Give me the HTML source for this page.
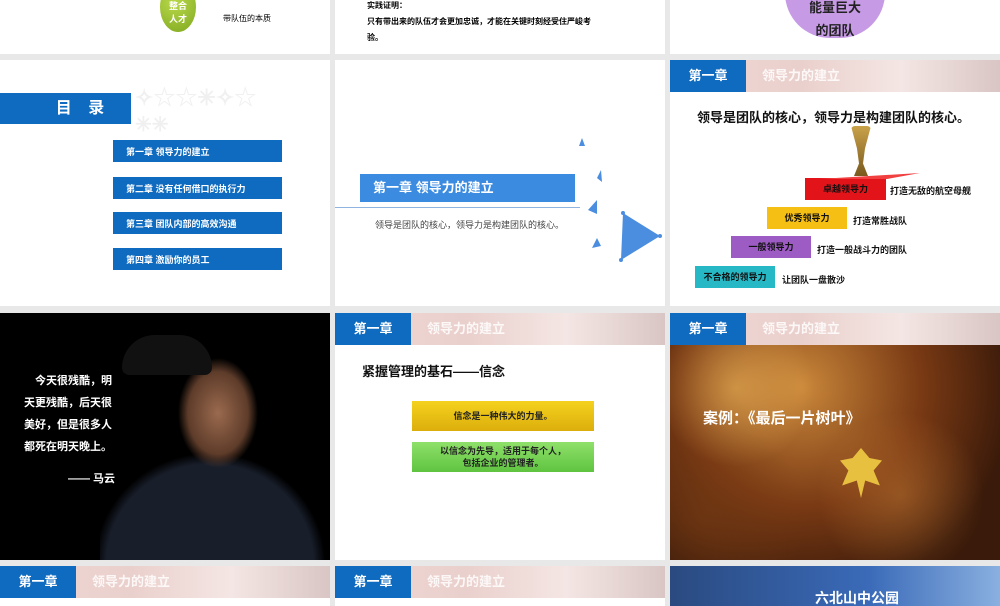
<!DOCTYPE html>
<html><head><meta charset="utf-8"><style>
*{margin:0;padding:0;box-sizing:border-box}
body{width:1000px;height:600px;background:#e8e8e8;position:relative;overflow:hidden;font-family:"Liberation Sans","Noto Sans CJK SC",sans-serif;font-weight:bold}
.s{position:absolute;background:#fff;overflow:hidden}
.a{position:absolute;white-space:nowrap}
.hdr{position:absolute;left:0;top:0;right:0;height:32px;background:linear-gradient(90deg,#f2d8d6,#ead0cc 40%,#f4e6e4 70%,#d9c6c4);}
.hdr .b{position:absolute;left:0;top:0;width:76px;height:32px;background:#0f6bbf;color:#fff;font-size:13px;line-height:32px;text-align:center}
.hdr .t{position:absolute;left:92px;top:0;line-height:32px;color:#fff;font-size:13px;opacity:.85}
.toc{position:absolute;left:113px;width:169px;height:22px;background:#0f6bbf;color:#fff;font-size:9px;line-height:24px;padding-left:13px}
.step{position:absolute;height:22px;font-size:9px;line-height:22px;text-align:center;color:#111}
.lab{position:absolute;font-size:9px;color:#111;white-space:nowrap}
</style></head><body>
<!-- row1 -->
<div class="s" style="left:0;top:0;width:330px;height:54px">
 <div class="a" style="left:160px;top:-18px;width:36px;height:50px;border-radius:50%;background:radial-gradient(circle at 40% 40%,#b9d84a,#7fa820)"></div>
 <div class="a" style="left:168px;top:0;color:#fff;font-size:9px;line-height:13px;text-align:center;width:20px;white-space:normal">整合<br>人才</div>
 <div class="a" style="left:223px;top:13px;font-size:8px;font-weight:normal">带队伍的本质</div>
</div>
<div class="s" style="left:335px;top:0;width:330px;height:54px">
 <div class="a" style="left:32px;top:0;font-size:8px">实践证明：</div>
 <div class="a" style="left:32px;top:16px;font-size:8px">只有带出来的队伍才会更加忠诚，才能在关键时刻经受住严峻考</div>
 <div class="a" style="left:32px;top:32px;font-size:8px">验。</div>
</div>
<div class="s" style="left:670px;top:0;width:330px;height:54px">
 <div class="a" style="left:115px;top:-20px;width:100px;height:58px;border-radius:0 0 45px 45px;background:#c79ae6"></div>
 <div class="a" style="left:115px;top:-4px;width:100px;text-align:center;font-size:13px;line-height:23px;color:#222;white-space:normal">能量巨大<br>的团队</div>
</div>
<!-- row2 -->
<div class="s" style="left:0;top:60px;width:330px;height:246px">
 <div class="a" style="left:0;top:33px;width:131px;height:31px;background:#0f6bbf;color:#fff;font-size:16px;line-height:31px;text-align:center;padding-left:35px;letter-spacing:6px">目 录</div>
 <div class="a" style="left:135px;top:20px;color:#f0f0f0;font-size:22px">✧☆☆✳✧☆</div>
 <div class="a" style="left:135px;top:52px;color:#f0f0f0;font-size:20px">✳✳</div>
 <div class="toc" style="top:80px">第一章 领导力的建立</div>
 <div class="toc" style="top:117px">第二章 没有任何借口的执行力</div>
 <div class="toc" style="top:152px">第三章 团队内部的高效沟通</div>
 <div class="toc" style="top:188px">第四章 激励你的员工</div>
</div>
<div class="s" style="left:335px;top:60px;width:330px;height:246px">
 <div class="a" style="left:25px;top:114px;width:215px;height:28px;background:#3b8be0;color:#fff;font-size:13px;line-height:28px;padding-left:13px">第一章 领导力的建立</div>
 <div class="a" style="left:0;top:147px;width:245px;height:1px;background:#8fb4e0"></div>
 <div class="a" style="left:40px;top:158px;font-size:9px;font-weight:normal;color:#444">领导是团队的核心，领导力是构建团队的核心。</div>
 <svg class="a" style="left:240px;top:50px" width="90" height="160"><g fill="#4b8ee0"><polygon points="7,28 4,36 10,36"/><polygon points="26,60 22,68 27,72"/><polygon points="22,90 13,100 22,104"/><polygon points="22,128 17,138 26,136"/><polygon points="48,103 46,150 85,126"/></g><circle cx="48" cy="103" r="2" fill="#4b8ee0"/><circle cx="85" cy="126" r="2" fill="#4b8ee0"/><circle cx="46" cy="150" r="2" fill="#4b8ee0"/></svg>
</div>
<div class="s" style="left:670px;top:60px;width:330px;height:246px">
 <div class="hdr"><div class="b">第一章</div><div class="t">领导力的建立</div></div>
 <div class="a" style="left:27px;top:47px;font-size:13px;color:#111">领导是团队的核心，领导力是构建团队的核心。</div>
 <div class="a" style="left:181px;top:66px;width:20px;height:50px;background:linear-gradient(#c9a24a,#7a5a1e);border-radius:4px 4px 2px 2px;clip-path:polygon(0 0,100% 0,70% 45%,60% 75%,85% 100%,15% 100%,40% 75%,30% 45%)"></div>
 <div class="step" style="left:135px;top:118px;width:81px;background:#e3131a">卓越领导力</div>
 <div class="a" style="left:140px;top:113px;width:110px;height:6px;background:#f04040;clip-path:polygon(8% 100%,100% 0,100% 0,70% 100%)"></div>
 <div class="lab" style="left:220px;top:124px">打造无敌的航空母舰</div>
 <div class="step" style="left:97px;top:147px;width:80px;background:#f6bf14">优秀领导力</div>
 <div class="lab" style="left:183px;top:154px">打造常胜战队</div>
 <div class="step" style="left:61px;top:176px;width:80px;background:#9d5bc4">一般领导力</div>
 <div class="lab" style="left:147px;top:183px">打造一般战斗力的团队</div>
 <div class="step" style="left:25px;top:206px;width:80px;background:#27b8c6">不合格的领导力</div>
 <div class="lab" style="left:112px;top:213px">让团队一盘散沙</div>
</div>
<!-- row3 -->
<div class="s" style="left:0;top:313px;width:330px;height:247px;background:#000">
 <div class="a" style="left:100px;top:20px;width:230px;height:227px;background:radial-gradient(ellipse 40px 55px at 118px 80px,#9a6a4e 0,#5e3c2a 75%,transparent 100%),radial-gradient(ellipse 115px 110px at 110px 230px,#181e2a 0,#181e2a 90%,transparent 100%)"></div>
 <div class="a" style="left:122px;top:22px;width:90px;height:40px;border-radius:45px 45px 10px 10px;background:#111"></div>
 <div class="a" style="left:12px;top:57px;color:#fff;font-size:11px;line-height:22px;width:100px;text-align:right">今天很残酷，明<br>天更残酷，后天很<br>美好，但是很多人<br>都死在明天晚上。</div>
 <div class="a" style="left:68px;top:157px;color:#fff;font-size:11px">—— 马云</div>
</div>
<div class="s" style="left:335px;top:313px;width:330px;height:247px">
 <div class="hdr"><div class="b">第一章</div><div class="t">领导力的建立</div></div>
 <div class="a" style="left:27px;top:48px;font-size:13px;color:#111">紧握管理的基石——信念</div>
 <div class="a" style="left:77px;top:88px;width:182px;height:30px;background:linear-gradient(#f4d21e,#dcae0c);font-size:9px;text-align:center;line-height:30px;color:#222">信念是一种伟大的力量。</div>
 <div class="a" style="left:77px;top:129px;width:182px;height:30px;background:linear-gradient(#8fe06a,#5fc440);font-size:9px;text-align:center;line-height:12px;padding-top:3px;color:#222">以信念为先导，适用于每个人，<br>包括企业的管理者。</div>
</div>
<div class="s" style="left:670px;top:313px;width:330px;height:247px;background:radial-gradient(circle at 40% 30%,#c9873a,#7a3a14 45%,#3a1a0a 80%)">
 <div class="a" style="left:0;top:32px;width:330px;height:215px;background:radial-gradient(circle at 20% 20%,rgba(255,200,100,.5),transparent 25%),radial-gradient(circle at 70% 70%,rgba(220,140,60,.4),transparent 30%),radial-gradient(circle at 10% 80%,rgba(120,60,20,.6),transparent 30%)"></div>
 <div class="hdr"><div class="b">第一章</div><div class="t">领导力的建立</div></div>
 <div class="a" style="left:33px;top:94px;color:#fff;font-size:15px">案例：《最后一片树叶》</div>
 <div class="a" style="left:170px;top:135px;width:42px;height:50px;background:#e8c040;clip-path:polygon(50% 0,70% 20%,100% 25%,80% 45%,95% 75%,60% 65%,50% 100%,40% 65%,5% 75%,20% 45%,0 25%,30% 20%)"></div>
</div>
<!-- row4 -->
<div class="s" style="left:0;top:566px;width:330px;height:40px"><div class="hdr"><div class="b">第一章</div><div class="t">领导力的建立</div></div></div>
<div class="s" style="left:335px;top:566px;width:330px;height:40px"><div class="hdr"><div class="b">第一章</div><div class="t">领导力的建立</div></div></div>
<div class="s" style="left:670px;top:566px;width:330px;height:40px;background:linear-gradient(90deg,#2a4a80,#3a6ab8 60%,#8ab0e0)">
 <div class="a" style="left:145px;top:22px;color:#fff;font-size:14px">六北山中公园</div>
</div>
</body></html>
